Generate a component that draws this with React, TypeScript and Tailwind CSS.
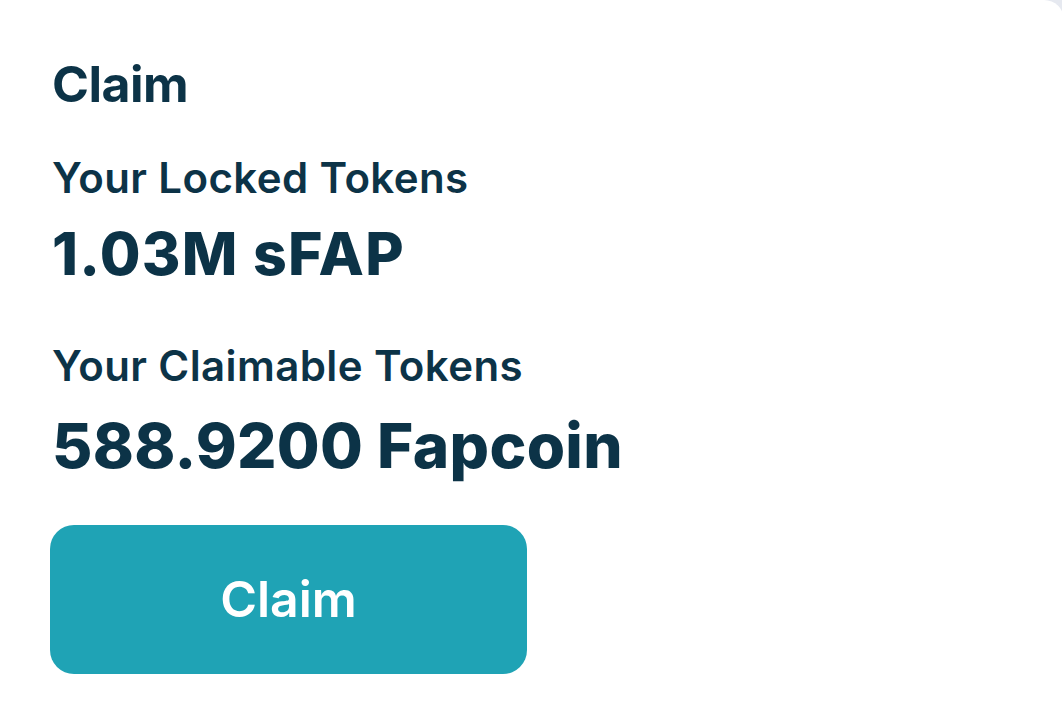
export default function App() {
  return (
    <div className="w-[1062px] h-[723px] overflow-hidden bg-[#e6e9f0]">
      <div
        className="w-[1064px] h-full bg-white rounded-tr-[20px] pl-[52px] pt-[59px] text-[#0c3347]"
        style={{ fontFamily: 'Inter, "Noto Sans", sans-serif' }}
      >
        <h2 className="text-[50px] leading-none font-bold tracking-[-0.5px]">Claim</h2>

        <p className="mt-[48px] text-[42px] leading-none font-semibold tracking-[0.4px]">Your Locked Tokens</p>
        <p className="mt-[25px] text-[59px] leading-none font-extrabold tracking-[1.3px]">1.03M sFAP</p>

        <p className="mt-[62px] text-[42px] leading-none font-semibold tracking-[0.4px]">Your Claimable Tokens</p>
        <p className="mt-[28px] text-[62px] leading-none font-extrabold tracking-[0.3px]">588.9200 Fapcoin</p>

        <button className="mt-[48px] ml-[-2px] w-[477px] h-[149px] rounded-[24px] bg-[#1fa3b5] text-white text-[50px] font-semibold">
          Claim
        </button>
      </div>
    </div>
  );
}
